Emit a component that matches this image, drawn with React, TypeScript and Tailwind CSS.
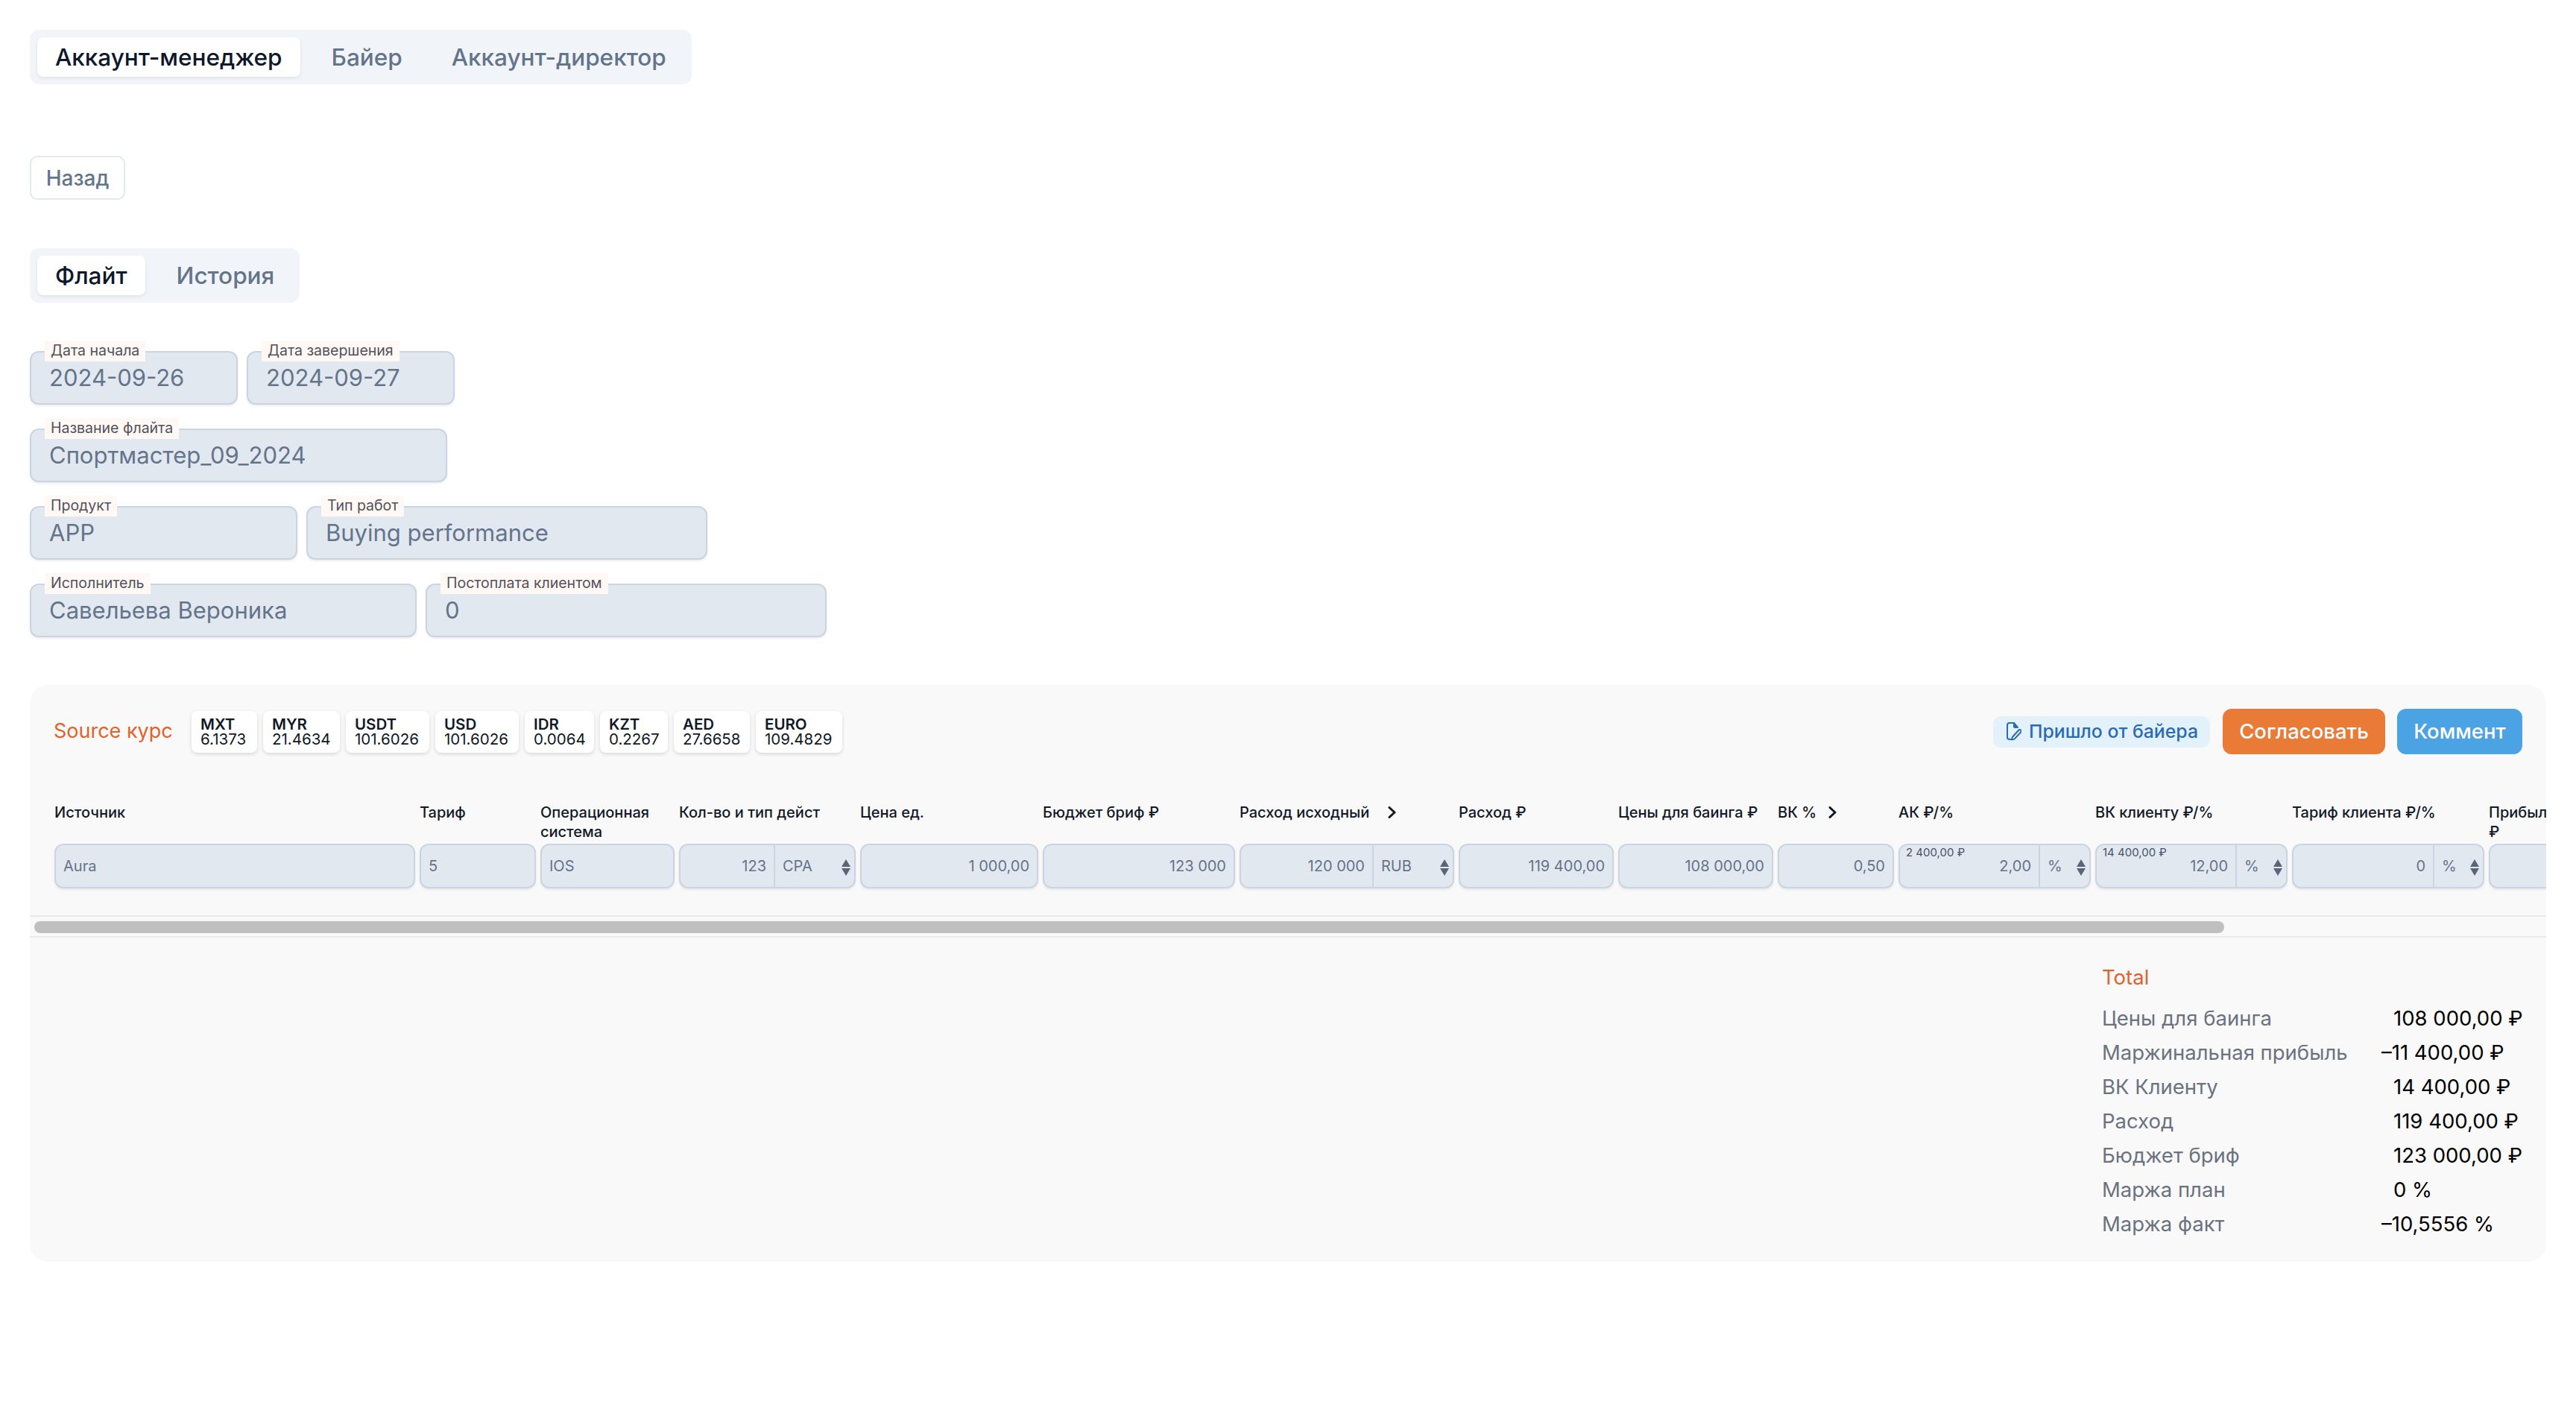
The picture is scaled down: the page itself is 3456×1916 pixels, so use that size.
const rates = [
  ["MXT", "6.1373", "w-[88px]"],
  ["MYR", "21.4634", "w-[103px]"],
  ["USDT", "101.6026", "w-[112px]"],
  ["USD", "101.6026", "w-[112px]"],
  ["IDR", "0.0064", "w-[93px]"],
  ["KZT", "0.2267", "w-[91px]"],
  ["AED", "27.6658", "w-[102px]"],
  ["EURO", "109.4829", "w-[116px]"],
];

const totals = [
  ["Цены для баинга", "108 000,00 ₽", false],
  ["Маржинальная прибыль", "–11 400,00 ₽", true],
  ["ВК Клиенту", "14 400,00 ₽", false],
  ["Расход", "119 400,00 ₽", false],
  ["Бюджет бриф", "123 000,00 ₽", false],
  ["Маржа план", "0 %", false],
  ["Маржа факт", "–10,5556 %", true],
] as const;

function Tabs({ items }: { items: string[] }) {
  return (
    <div className="inline-flex h-[73px] items-center gap-[18px] rounded-[12px] bg-[#f1f5f9] px-[10px]">
      {items.map((item, i) => (
        <div
          key={item}
          className={
            i === 0
              ? "flex h-[53px] items-center rounded-[8px] bg-white px-[24px] text-[31.5px] font-medium text-[#0f172a] shadow-[0_2px_4px_rgba(15,23,42,0.08)]"
              : "flex h-[53px] items-center px-[24px] text-[31.5px] font-medium text-[#64748b]"
          }
        >
          {item}
        </div>
      ))}
    </div>
  );
}

function Field({ label, value, width }: { label: string; value: string; width: string }) {
  return (
    <div className={`relative h-[72px] rounded-[12px] border-2 border-[#cbd5e1] bg-[#e2e8f0] pl-[24px] pt-[12px] shadow-[0_2px_3px_rgba(15,23,42,0.08)] ${width}`}>
      <span className="absolute left-[18px] top-[-16px] flex h-[28px] items-center bg-[#fff8f5] px-[8px] text-[19.5px] leading-none text-[#52525b]">
        {label}
      </span>
      <span className="text-[31px] leading-[44px] text-[#64748b]">{value}</span>
    </div>
  );
}

function Spinner() {
  return (
    <svg width="12" height="22" viewBox="0 0 12 22" className="absolute right-[5px] top-[19px] fill-[#5a6578]">
      <path d="M6 0 L12 10 L0 10 Z" />
      <path d="M6 22 L12 12 L0 12 Z" />
    </svg>
  );
}

function Cell({ value, align = "right", unit, divider, hint }: { value: string; align?: "left" | "right"; unit?: string; divider?: string; hint?: string }) {
  return (
    <div className="relative flex h-[60px] rounded-[12px] border-2 border-[#cbd5e1] bg-[#e2e8f0] text-[20px] text-[#64748b] shadow-[0_2px_3px_rgba(15,23,42,0.08)]">
      {hint && <span className="absolute left-[8px] top-[1px] text-[15px] leading-[18px] text-[#475569]">{hint}</span>}
      <div className={`flex h-full items-center px-[10px] ${align === "right" ? "justify-end" : ""} ${divider ?? "flex-1"}`}>{value}</div>
      {unit && (
        <>
          <div className="flex h-full flex-1 items-center border-l-2 border-[#cbd5e1] pl-[10px]">{unit}</div>
          <Spinner />
        </>
      )}
    </div>
  );
}

function Head({ children, more }: { children: string; more?: string }) {
  return (
    <div className="flex items-start text-[20px] leading-[26px] font-medium text-[#111827]">
      <span>{children}</span>
      {more && (
        <svg width="11" height="16" viewBox="0 0 11 16" fill="none" stroke="#111827" strokeWidth="3" strokeLinecap="round" strokeLinejoin="round" className={`mt-[5px] ${more}`}>
          <path d="M2 1.5 L9 8 L2 14.5" />
        </svg>
      )}
    </div>
  );
}

export default function App() {
  return (
    <div className="min-h-[1916px] overflow-hidden bg-white p-[40px] font-['Inter',sans-serif]">
      <Tabs items={["Аккаунт-менеджер", "Байер", "Аккаунт-директор"]} />

      <div className="mt-[96px]">
        <button className="h-[59px] w-[128px] rounded-[10px] border-2 border-[#e2e8f0] bg-white text-[28px] font-medium text-[#64748b]">
          Назад
        </button>
      </div>

      <div className="mt-[65px]">
        <Tabs items={["Флайт", "История"]} />
      </div>

      <div className="mt-[65px] flex flex-col gap-[32px]">
        <div className="flex gap-[12px]">
          <Field label="Дата начала" value="2024-09-26" width="w-[279px]" />
          <Field label="Дата завершения" value="2024-09-27" width="w-[279px]" />
        </div>
        <Field label="Название флайта" value="Спортмастер_09_2024" width="w-[560px]" />
        <div className="flex gap-[12px]">
          <Field label="Продукт" value="APP" width="w-[359px]" />
          <Field label="Тип работ" value="Buying performance" width="w-[538px]" />
        </div>
        <div className="flex gap-[12px]">
          <Field label="Исполнитель" value="Савельева Вероника" width="w-[519px]" />
          <Field label="Постоплата клиентом" value="0" width="w-[538px]" />
        </div>
      </div>

      <section className="mt-[64px] h-[774px] w-[3376px] overflow-hidden rounded-[24px] bg-[#f9f9f9]">
        <div className="flex items-center pl-[32px] pr-[32px] pt-[32px]">
          <span className="w-[185px] text-[27px] text-[#e2622b]">Source курс</span>
          <div className="flex gap-[8px]">
            {rates.map(([code, rate, width]) => (
              <div key={code} className={`flex h-[56px] flex-col justify-center whitespace-nowrap rounded-[8px] bg-white pl-[12px] text-[20.5px] leading-[20px] text-[#111827] shadow-[0_2px_5px_rgba(15,23,42,0.14)] ${width}`}>
                <span className="font-semibold">{code}</span>
                <span>{rate}</span>
              </div>
            ))}
          </div>
          <div className="ml-auto flex items-center">
            <div className="flex h-[42px] items-center rounded-[10px] bg-[#e3f1fb] pl-[18px] pr-[16px] text-[24.8px] font-medium text-[#2b6cb0]">
              <svg width="20" height="25" viewBox="0 0 20 25" fill="none" stroke="#2b6cb0" strokeWidth="2" strokeLinecap="round" strokeLinejoin="round" className="mr-[10px]">
                <path d="M10 1 H4 A3 3 0 0 0 1 4 V20 A3 3 0 0 0 4 23 H6" />
                <path d="M10 1 V6 A1 1 0 0 0 11 7 H15 Z" fill="#2b6cb0" />
                <path d="M16.5 10.5 A2 2 0 0 1 19.3 13.3 L10.5 22.6 L7 23.6 L7.8 20 Z" />
              </svg>
              Пришло от байера
            </div>
            <button className="ml-[17px] h-[61px] w-[218px] rounded-[12px] bg-[#e97b37] text-[27.5px] font-medium text-white">Согласовать</button>
            <button className="ml-[16px] h-[61px] w-[168px] rounded-[12px] bg-[#4ba3e3] text-[27.5px] font-medium text-white">Коммент</button>
          </div>
        </div>

        <div className="mt-[65px] grid w-[3600px] grid-cols-[484px_156px_180px_237px_239px_258px_288px_208px_208px_156px_258px_258px_258px_100px] gap-x-[6px] pl-[33px]">
          <Head>Источник</Head>
          <Head>Тариф</Head>
          <Head>Операционная система</Head>
          <Head>Кол-во и тип дейст</Head>
          <Head>Цена ед.</Head>
          <Head>Бюджет бриф ₽</Head>
          <Head more="ml-[25px]">Расход исходный</Head>
          <Head>Расход ₽</Head>
          <Head>Цены для баинга ₽</Head>
          <Head more="ml-[16px]">ВК %</Head>
          <Head>АК ₽/%</Head>
          <Head>ВК клиенту ₽/%</Head>
          <Head>Тариф клиента ₽/%</Head>
          <Head>Прибыль ₽</Head>
        </div>
        <div className="mt-[3px] grid w-[3600px] grid-cols-[484px_156px_180px_237px_239px_258px_288px_208px_208px_156px_258px_258px_258px_200px] gap-x-[6px] pl-[33px]">
          <Cell value="Aura" align="left" />
          <Cell value="5" align="left" />
          <Cell value="IOS" align="left" />
          <Cell value="123" unit="CPA" divider="w-[125px]" />
          <Cell value="1 000,00" />
          <Cell value="123 000" />
          <Cell value="120 000" unit="RUB" divider="w-[176px]" />
          <Cell value="119 400,00" />
          <Cell value="108 000,00" />
          <Cell value="0,50" />
          <Cell value="2,00" unit="%" divider="w-[186px]" hint="2 400,00 ₽" />
          <Cell value="12,00" unit="%" divider="w-[186px]" hint="14 400,00 ₽" />
          <Cell value="0" unit="%" divider="w-[187px]" />
          <Cell value="" />
        </div>

        <div className="mt-[36px] h-[30px] border-y-2 border-[#e9e9e9] px-[6px] py-[6px]">
          <div className="h-[16px] w-[2938px] rounded-full bg-[#bfbfbf]" />
        </div>

        <div className="ml-auto mt-[36px] w-[596px] text-[27.5px]">
          <div className="leading-[34px] text-[#e2622b]">Total</div>
          <div className="mt-[15px] grid grid-cols-[391px_1fr]">
            {totals.map(([label, value, negative]) => (
              <div key={label} className="contents">
                <span className="leading-[46px] text-[#6b7280]">{label}</span>
                <span className={`leading-[46px] text-black ${negative ? "ml-[-16px]" : ""}`}>{value}</span>
              </div>
            ))}
          </div>
        </div>
      </section>
    </div>
  );
}
